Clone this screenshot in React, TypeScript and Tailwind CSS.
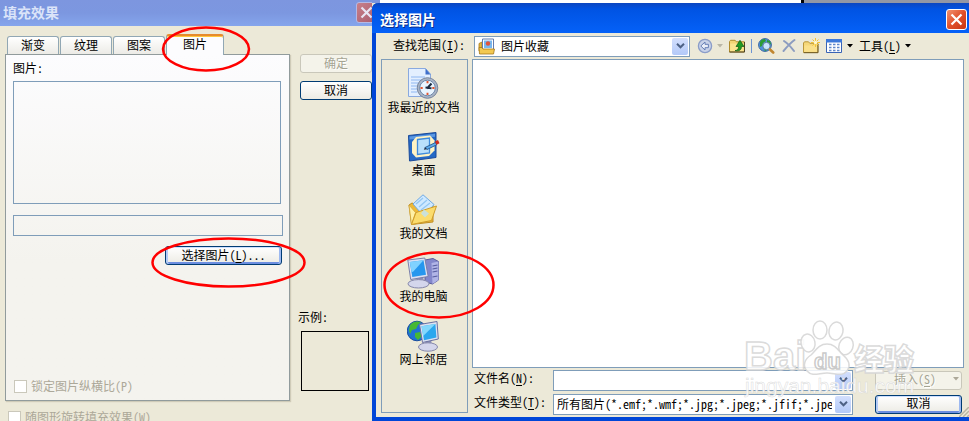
import type { ReactNode } from "react";
import clsx from "clsx";

type AccessKeyProps = { text: string; accessKey: string; suffix?: string };

function Label({ text, accessKey, suffix = "" }: AccessKeyProps) {
  return (
    <span>
      {text}(<span className="underline underline-offset-2">{accessKey}</span>){suffix}
    </span>
  );
}

function Caret({ className = "text-black" }: { className?: string }) {
  return (
    <svg width="6" height="4" viewBox="0 0 6 4" className={clsx("shrink-0", className)} fill="currentColor">
      <path d="M0 0h6L3 3.5z" />
    </svg>
  );
}

type ComboProps = { label: string; id: string; children: ReactNode; className?: string };

function Combo({ label, id, children, className }: ComboProps) {
  return (
    <div className={clsx("relative flex h-[21px] items-center border border-[#7f9db9] bg-white", className)}>
      <select id={id} aria-label={label} className="h-full w-full appearance-none bg-transparent pr-5 text-[12px] leading-4 text-black outline-none">
        {children}
      </select>
      <span className="pointer-events-none absolute inset-y-px right-px flex w-4 items-center justify-center rounded-xs bg-gradient-to-b from-[#d3dffd] to-[#b3c9f8]">
        <svg width="9" height="6" viewBox="0 0 9 6" fill="none" stroke="#4d6185" strokeWidth="2">
          <path d="M1 .8 4.5 4.3 8 .8" />
        </svg>
      </span>
    </div>
  );
}

type XpButtonProps = { children: ReactNode; variant?: "plain" | "focus" | "disabled"; className?: string };

function XpButton({ children, variant = "plain", className }: XpButtonProps) {
  return (
    <button
      type="button"
      disabled={variant === "disabled"}
      className={clsx(
        "flex h-[19px] items-center justify-center rounded-[3px] border pb-0.5 text-[12px] leading-4",
        variant === "disabled" && "border-[#c9c7ba] bg-[#f4f3ea] text-[#a5a493] [text-shadow:1px_1px_0_#fff]",
        variant === "plain" && "border-[#003c74] bg-gradient-to-b from-white to-[#ecebe4]",
        variant === "focus" && "border-[#003c74] bg-gradient-to-b from-white to-[#ecebe4] shadow-[inset_2px_0_0_#b4cbf5,inset_-2px_0_0_#9db9f0,inset_0_1px_0_#cee0ff,inset_0_-2px_0_#6c8ee0]",
        className,
      )}
    >
      {children}
    </button>
  );
}

function CloseButton({ faded }: { faded?: boolean }) {
  return (
    <button
      type="button"
      aria-label="关闭"
      className={clsx(
        "flex size-[21px] shrink-0 items-center justify-center rounded-[3px] border",
        faded ? "border-[#b5b9e4] bg-gradient-to-br from-[#c8808a] to-[#a85b6e]" : "border-white bg-gradient-to-br from-[#f0916f] via-[#e0502a] to-[#c83410]",
      )}
    >
      <svg width="13" height="13" viewBox="0 0 13 13" stroke={faded ? "#e8e4f2" : "#fff"} strokeWidth="2.2">
        <path d="m1.5 1.5 10 10M11.5 1.5l-10 10" />
      </svg>
    </button>
  );
}

/* ---------- toolbar icons ---------- */

function BackIcon() {
  return (
    <svg width="16" height="16" viewBox="0 0 16 16">
      <circle cx="8" cy="8" r="6.6" fill="#c8d2e8" stroke="#8a9cc8" strokeWidth="1.3" />
      <path d="M3.8 8 8 4v2.3h3.4v3.4H8V12z" fill="#e9eef8" stroke="#667fb5" />
    </svg>
  );
}

function UpFolderIcon() {
  return (
    <svg width="16" height="16" viewBox="0 0 16 16">
      <path d="M.5 14V3.5l1-1.2h4.6l1.3 1.5h8V14z" fill="#f3d474" stroke="#b08c2c" />
      <path d="M1.2 13.3V5.5h13.5v7.8z" fill="#fbe48f" />
      <path d="M15.5 4v10H.5" fill="none" stroke="#4b4124" />
      <path d="M6 12.6c2.6-.3 3.6-1.700 3.600-4.100H7L11 2.300l4 6.200h-2.500c0 3.400-2.100 5-6.500 4.100z" fill="#1f9a22" stroke="#0f5c14" strokeWidth=".7" />
    </svg>
  );
}

function SearchWebIcon() {
  return (
    <svg width="17" height="16" viewBox="0 0 17 16">
      <circle cx="7" cy="7" r="6.4" fill="#4f93dc" stroke="#3a669f" />
      <path d="M2 4c1-2 3-3 5-3l1 2-3 2-1 3-2 1zM9 2l3 1 1 3-2 1-2-2zM5 10l3-1 1 3-2 1z" fill="#2c9c33" />
      <circle cx="8.500" cy="8" r="3.700" fill="#d5ecff" fillOpacity=".9" stroke="#587a9a" />
      <path d="m12 11.500 3.200 3" stroke="#c08630" strokeWidth="2.600" strokeLinecap="round" />
    </svg>
  );
}

function DeleteIcon() {
  return (
    <svg width="16" height="16" viewBox="0 0 16 16" stroke="#8c9cc0" strokeWidth="2" strokeLinecap="round">
      <path d="M3 3c4 2.500 7 6 10 10M13.500 2C9 5 6 9 2.500 13" fill="none" />
    </svg>
  );
}

function NewFolderIcon() {
  return (
    <svg width="17" height="16" viewBox="0 0 17 16">
      <path d="M.5 14.500V5l1-1.200h4l1.300 1.500h8v9.200z" fill="#f5d779" stroke="#b9963b" />
      <path d="M1.200 13.800V7.500h13v6.300z" fill="#fae08a" />
      <path d="M15 6v8.700H.8" fill="none" stroke="#6d5b28" />
      <path d="M12.500 0v9M8 4.500h9M9.500 1.500l6 6M15.500 1.500l-6 6" stroke="#f5c22f" />
      <circle cx="12.500" cy="4.500" r="1.700" fill="#fff9cf" />
    </svg>
  );
}

function ViewsIcon() {
  return (
    <svg width="16" height="14" viewBox="0 0 16 14">
      <path d="M.5.5h15v13H.5z" fill="#fff" stroke="#3863b5" />
      <path d="M0 0h16v3.500H0z" fill="#3c78da" />
      <path d="M3 5.500h2.500M7 5.500h2.500M11 5.500h2.500M3 8.500h2.500M7 8.500h2.500M11 8.500h2.500M3 11.500h2.500M7 11.500h2.500M11 11.500h2.500" stroke="#5f87cb" strokeWidth="1.500" />
    </svg>
  );
}

function PictureFolderIcon() {
  return (
    <svg width="17" height="17" viewBox="0 0 17 17">
      <path d="M1 5.500 4 4v9H1z" fill="#e6b740" stroke="#a77916" strokeWidth=".8" />
      <path d="M4.500 1h11v11h-11z" fill="#fff" stroke="#637cae" />
      <path d="M6 2.500h8v7.500H6z" fill="#78b8f0" />
      <circle cx="10" cy="5.500" r="2.200" fill="#e0543b" />
      <path d="M1 9.500h3l1 1.500h11.500L15.500 16H1.500z" fill="#f3c951" stroke="#a77916" strokeWidth=".8" />
    </svg>
  );
}

/* ---------- places bar icons ---------- */

function RecentIcon() {
  return (
    <svg width="32" height="32" viewBox="0 0 32 32">
      <path d="M1.500.5h17l5 5.500v22.500h-22z" fill="#e3efff" stroke="#89a9df" />
      <path d="M18.500.5v6h5z" fill="#3f6fcb" />
      <path d="M4 9h14M4 12h11M4 15h8M4 18h7M4 21h6M4 24h6" stroke="#8fb8f2" strokeWidth="1.200" />
      <circle cx="20.500" cy="20" r="10.300" fill="#a9b4c6" stroke="#77859d" />
      <circle cx="20.500" cy="20" r="7.800" fill="#e9f5ff" stroke="#6d87a9" />
      <path d="M20.500 13v2.200M20.500 24.800V27M13.500 20h2.200M25.300 20h2.200" stroke="#e3552e" strokeWidth="1.900" />
      <path d="m24.500 15.500-4.500 5M18.500 19.500l6 .7" stroke="#1d2b40" strokeWidth="2" />
    </svg>
  );
}

function DesktopIcon() {
  return (
    <svg width="32" height="32" viewBox="0 0 32 32">
      <path d="m.5 4.500 27.500-3v25L1.500 30z" fill="#2569c6" stroke="#1b4b9b" />
      <path d="m1.500 5.500 25.500-2.800v3L1.500 8.500z" fill="#5a98e3" />
      <path d="m8 6 14-1.500 4.500 5v10L21 25 8 26.500 4 22V11z" fill="#fff3c4" />
      <path d="m9.500 8.500 12-1.500v15l-12 1.500z" fill="#b9dffb" stroke="#3f8bdc" strokeWidth="1.300" />
      <path d="m17 16.500 10.500-5 1.200 2.300L19 18.500z" fill="#5daaeb" stroke="#23568f" strokeWidth=".9" />
      <path d="m27 10.500 3-1.500 1.500 3.200-3 1.500z" fill="#d02c1c" />
      <path d="m15.800 18.800 1.200-2.500 2 2z" fill="#1b2a44" />
    </svg>
  );
}

function DocumentsIcon() {
  return (
    <svg width="32" height="32" viewBox="0 0 32 32">
      <path d="m2 11 3-2 7 3 14-1v17L4.500 30.500z" fill="#eeb937" stroke="#bf8e24" />
      <path d="M6 10 16 .8l11 9.700-10 12z" fill="#cfe9ff" stroke="#6fa9e2" />
      <path d="m9 10 7-6M12 13l8-7M14 16l9-7" stroke="#93c7f3" strokeWidth="1.300" />
      <path d="m2 11 6.500 7.500-4 12z" fill="#fff0a5" stroke="#d3a83a" strokeWidth=".8" />
      <path d="m9 18.500 20.500-6.500-5 14.500-20 4z" fill="#fbdc6c" stroke="#cf9d2c" />
      <path d="m17 15.500 5 4-4 4-4-4z" fill="#bfe2f5" fillOpacity=".8" />
    </svg>
  );
}

function ComputerIcon() {
  return (
    <svg width="32" height="32" viewBox="0 0 32 32">
      <path d="m18 3 8-1.500 5.500 3V23l-6 4-7.500-2z" fill="#8387cb" stroke="#5a5d9b" />
      <path d="m24.500 6 7-1.500V23l-6 4z" fill="#b0b4e6" />
      <path d="m25.500 9 5-1M25.500 12l5-1M25.500 15l5-1M25.500 20l5-1" stroke="#565c9f" strokeWidth="1.200" />
      <path d="m9 20 7-1 1 6-6 1z" fill="#8b90b9" />
      <ellipse cx="11.500" cy="26.800" rx="10.500" ry="4.200" fill="#d4d6ec" stroke="#8587aa" />
      <path d="m.8 3 17-2 3.400 18.500-17.500 3z" fill="#dbe0f3" stroke="#7b80aa" />
      <path d="M2.800 5 16.500 3.300 19 17.800 5.300 20z" fill="#2697ee" />
      <path d="M2.800 5 16.500 3.300 6.300 14.500l-1.700.8z" fill="#80d2ff" />
    </svg>
  );
}

function NetworkIcon() {
  return (
    <svg width="32" height="32" viewBox="0 0 32 32">
      <circle cx="10" cy="11" r="9.800" fill="#1f72d4" stroke="#174d9f" />
      <path d="M3 5c3-4 8-4 11-3l-3 3-2 4-4 1-2 4-1-4zM8 13l5-1 2 4-4 4-3-3z" fill="#47b834" />
      <path d="m18 20 6-1 1 7-6 1z" fill="#8b90b9" />
      <ellipse cx="21" cy="27" rx="9.500" ry="4.200" fill="#d4d6ec" stroke="#8587aa" />
      <path d="m12.500 4.500 17.500-3L31.300 19 15.500 22.500z" fill="#dce1f1" stroke="#6a70a0" />
      <path d="M14.500 6.300 28.400 4l1 13.500L17 20.300z" fill="#2ba7ee" />
      <path d="M14.500 6.300 28.400 4 16.200 16z" fill="#83d8fc" />
    </svg>
  );
}

const tabs = ["渐变", "纹理", "图案", "图片"];

const places = [
  { name: "我最近的文档", Icon: RecentIcon },
  { name: "桌面", Icon: DesktopIcon },
  { name: "我的文档", Icon: DocumentsIcon },
  { name: "我的电脑", Icon: ComputerIcon },
  { name: "网上邻居", Icon: NetworkIcon },
];

function FillEffectsDialog() {
  return (
    <section className="flex w-[372px] shrink-0 flex-col overflow-hidden bg-[#ece9d8]">
      <header className="flex h-[26px] shrink-0 items-center justify-between bg-gradient-to-b from-[#7d96df] via-[#7c97e0] to-[#85a5ec] pb-0.5 pl-[3px] text-[14px] font-bold text-[#dbe4f9]">
        <h1>填充效果</h1>
        <div className="w-4">
          <CloseButton faded />
        </div>
      </header>
      <div className="flex flex-1 pt-2">
        <div className="flex w-[290px] shrink-0 flex-col pl-[5px]">
          <div role="tablist" className="flex h-5 items-end pl-0.5">
            {tabs.map((tab, i) => {
              const active = i === tabs.length - 1;
              return (
                <button
                  key={tab}
                  type="button"
                  role="tab"
                  aria-selected={active}
                  className={clsx(
                    "relative rounded-t-[3px] border border-b-0 border-[#91a7b4] text-[12px] leading-4",
                    active ? "-mb-px h-[21px] w-[58px] border-t-2 border-t-[#e68b2c] bg-[#fcfcfe] pb-1 shadow-[inset_0_1px_0_#ffc73c]" : "mr-px h-[18px] w-[52px] bg-gradient-to-b from-white to-[#ecebe6] pb-0.5",
                  )}
                >
                  {tab}
                </button>
              );
            })}
          </div>
          <div className="flex h-[347px] flex-col border border-[#919b9c] bg-gradient-to-b from-[#fcfcfe] to-[#f4f3ee] to-60% px-[7px] pt-[5px] pb-[6px] shadow-[1px_1px_1px_#cfcbb8]">
            <span className="text-[12px] leading-4">图片:</span>
            <div className="mt-[5px] mr-px h-[123px] border border-[#7f9db9]" />
            <input aria-label="图片" readOnly className="mt-[11px] -mr-px h-[21px] border border-[#7f9db9] bg-transparent px-1 outline-none" />
            <XpButton variant="focus" className="mt-[10px] w-[117px] self-end">
              <Label text="选择图片" accessKey="L" suffix="..." />
            </XpButton>
            <label className="mt-auto flex items-center gap-1 pl-px text-[12px] leading-4 text-[#aca899]">
              <input type="checkbox" disabled className="size-[13px] appearance-none border border-[#cac8bb] bg-white" />
              锁定图片纵横比(P)
            </label>
          </div>
          <label className="mt-2 ml-[3px] flex items-center gap-1 text-[12px] leading-4 text-[#aca899]">
            <input type="checkbox" disabled className="size-[13px] appearance-none border border-[#cac8bb] bg-white" />
            随图形旋转填充效果(W)
          </label>
        </div>
        <div className="flex flex-1 flex-col pt-5 pl-[10px]">
          <XpButton variant="disabled">确定</XpButton>
          <XpButton className="mt-2">取消</XpButton>
          <span className="mt-[209px] -ml-0.5 text-[12px] leading-4">示例:</span>
          <div className="mt-[6px] mr-[3px] ml-px h-[60px] border border-black" />
        </div>
      </div>
    </section>
  );
}

function PickImageDialog() {
  return (
    <section className="flex min-w-0 flex-1 flex-col rounded-tl-md border-b-4 border-l-4 border-[#0046d8] bg-[#ece9d8]">
      <header className="-ml-1 flex h-[30px] shrink-0 items-center justify-between rounded-tl-md bg-gradient-to-b from-[#0b46c0] via-[#0053e3] via-20% to-[#0561f8] pt-1 pr-0.5 pb-0.5 pl-2 text-[14px] font-bold text-white [text-shadow:1px_1px_0_#0a2f8c]">
        <h2>选择图片</h2>
        <CloseButton />
      </header>
      <div className="flex h-[26px] shrink-0 items-center">
        <label htmlFor="look-in" className="w-[98px] shrink-0 pb-0.5 pl-[17px] text-[12px] leading-4">
          <Label text="查找范围" accessKey="I" suffix=":" />
        </label>
        <div className="relative w-[216px]">
          <Combo id="look-in" label="查找范围" className="pl-[26px]">
            <option>图片收藏</option>
          </Combo>
          <span className="pointer-events-none absolute top-0.5 left-1">
            <PictureFolderIcon />
          </span>
        </div>
        <div className="flex items-center gap-[6px] pl-[7px]">
          <button type="button" aria-label="后退" className="flex items-center gap-1">
            <BackIcon />
            <Caret className="text-[#b9b6a6]" />
          </button>
          <button type="button" aria-label="向上一级">
            <UpFolderIcon />
          </button>
          <span className="h-[14px] w-px bg-[#6d94d2]" />
          <button type="button" aria-label="搜索 Web">
            <SearchWebIcon />
          </button>
          <button type="button" aria-label="删除">
            <DeleteIcon />
          </button>
          <button type="button" aria-label="新建文件夹">
            <NewFolderIcon />
          </button>
          <button type="button" aria-label="视图" className="flex items-center gap-[5px]">
            <ViewsIcon />
            <Caret />
          </button>
          <button type="button" className="flex items-center gap-1 text-[12px] leading-4 whitespace-nowrap">
            <Label text="工具" accessKey="L" />
            <Caret />
          </button>
        </div>
      </div>
      <div className="flex min-h-0 flex-1 gap-1 pr-[5px] pl-[5px]">
        <nav className="mb-1 flex w-[87px] shrink-0 flex-col items-center gap-[17px] border border-[#7f9db9] pt-2">
          {places.map(({ name, Icon }) => (
            <button key={name} type="button" className="flex flex-col items-center pr-0.5 text-[12px] leading-[14px] whitespace-nowrap">
              <Icon />
              {name}
            </button>
          ))}
        </nav>
        <div className="flex min-w-0 flex-1 flex-col">
          <div className="min-h-0 flex-1 border border-[#7f9db9] bg-white" />
          <div className="flex h-6 shrink-0 items-center text-[12px] leading-4">
            <label htmlFor="file-name" className="w-[81px] shrink-0 pb-1 pl-0.5">
              <Label text="文件名" accessKey="N" suffix=":" />
            </label>
            <Combo id="file-name" label="文件名" className="min-w-0 flex-1">
              <option />
            </Combo>
            <XpButton variant="disabled" className="mr-0.5 ml-[22px] w-[87px] gap-[17px] pl-4">
              <Label text="插入" accessKey="S" />
              <Caret className="text-[#aca899]" />
            </XpButton>
          </div>
          <div className="mb-px flex h-6 shrink-0 items-center text-[12px] leading-4">
            <label htmlFor="file-type" className="w-[81px] shrink-0 pb-1 pl-0.5">
              <Label text="文件类型" accessKey="T" suffix=":" />
            </label>
            <Combo id="file-type" label="文件类型" className="min-w-0 flex-1 pl-[3px]">
              <option>所有图片(*.emf;*.wmf;*.jpg;*.jpeg;*.jfif;*.jpe</option>
            </Combo>
            <XpButton variant="focus" className="mr-0.5 ml-[22px] w-[87px]">
              取消
            </XpButton>
          </div>
        </div>
      </div>
      <svg width="10" height="10" viewBox="0 0 10 10" className="absolute right-0 bottom-1" strokeWidth="1.500">
        <path d="M0 10 10 0M4 10l6-6M8 10l2-2" stroke="#b8b4a2" />
      </svg>
    </section>
  );
}

function Watermark() {
  return (
    <svg width="180" height="90" viewBox="0 0 180 90" className="pointer-events-none absolute right-[47px] bottom-4" fill="#fff" fillOpacity=".85" stroke="#d6d6d6" strokeOpacity=".9" strokeWidth="1.500">
      <text x="2" y="55" className="text-[40px] font-bold" fontFamily="Liberation Sans, sans-serif">
        Bai
      </text>
      <ellipse cx="66" cy="28" rx="7" ry="9" transform="rotate(-12 66 28)" />
      <ellipse cx="78" cy="15" rx="7" ry="9" />
      <ellipse cx="94" cy="16" rx="7" ry="9" transform="rotate(12 94 16)" />
      <ellipse cx="104" cy="31" rx="7" ry="9" transform="rotate(20 104 31)" />
      <path d="M85 29c8 0 11 6 16 11 6 5 8 11 4 16-5 6-12 2-20 2s-15 4-20-2c-5-6-2-12 4-16 5-5 8-11 16-11z" />
      <text x="72" y="54" className="text-[22px] font-bold" fontFamily="Liberation Sans, sans-serif" stroke="#c4c4c4">
        du
      </text>
      <text x="112" y="55" className="text-[30px] font-black" fontFamily="Noto Sans CJK SC, sans-serif">
        经验
      </text>
      <text x="3" y="78" className="text-[21px]" fontFamily="Liberation Sans, sans-serif" strokeWidth=".5">
        jingyan.baidu.com
      </text>
    </svg>
  );
}

export default function App() {
  return (
    <main className="relative flex h-screen overflow-hidden bg-[#ece9d8] font-['Noto_Sans_Mono_CJK_SC','Noto_Sans_CJK_SC',sans-serif] text-black">
      <FillEffectsDialog />
      <div className="flex min-w-0 flex-1 flex-col">
        <div className="flex h-[3px] shrink-0 bg-white">
          <div className="w-[8px] bg-[#7d96df]" />
          <div className="flex-1" />
          <div className="w-[168px] border-l-[3px] border-black bg-[#9297a5]" />
        </div>
        <PickImageDialog />
      </div>
      <Watermark />
      <svg className="pointer-events-none absolute top-0 left-0" width="500" height="330" fill="none" stroke="#f00" strokeWidth="2.500">
        <ellipse cx="206" cy="49" rx="43" ry="21.500" />
        <ellipse cx="228.500" cy="262.500" rx="76" ry="24" />
        <ellipse cx="439" cy="285" rx="54.500" ry="32.500" />
      </svg>
    </main>
  );
}
